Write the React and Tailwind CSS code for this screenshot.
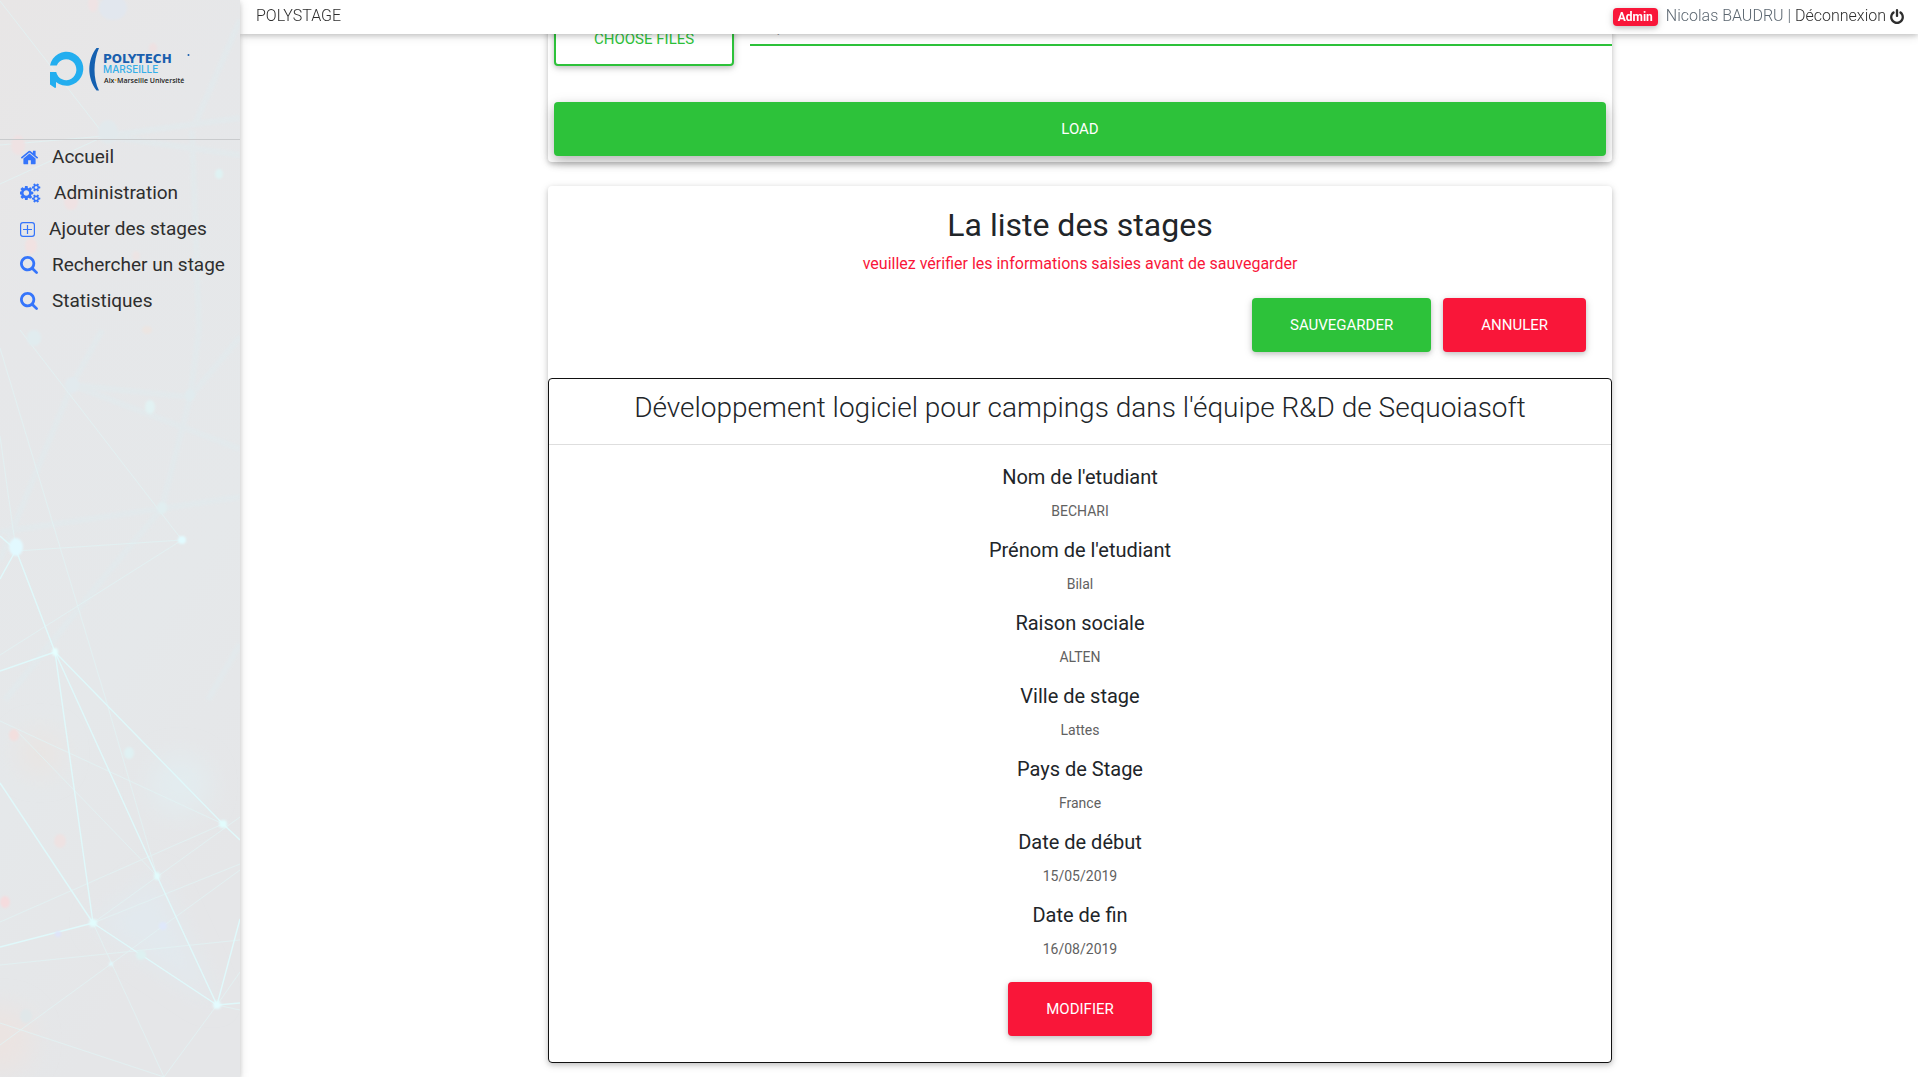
import React from "react";

const ICONS = {
  home: {
    box: "0 0 1792 1792",
    d: "M1472 992v480q0 26-19 45t-45 19h-384v-384h-256v384h-384q-26 0-45-19t-19-45v-480q0-1 .5-3t.5-3l575-474 575 474q1 2 1 6zm223-69l-62 74q-8 9-21 11h-3q-13 0-21-7l-692-577-692 577q-12 8-24 7-13-2-21-11l-62-74q-8-10-7-23.5t11-21.5l719-599q32-26 76-26t76 26l244 204v-195q0-14 9-23t23-9h192q14 0 23 9t9 23v408l219 182q10 8 11 21.5t-7 23.5z",
  },
  search: {
    box: "64 128 1664 1664",
    d: "M1216 832q0-185-131.5-316.5t-316.5-131.5-316.5 131.5-131.5 316.5 131.5 316.5 316.5 131.5 316.5-131.5 131.5-316.5zm512 832q0 52-38 90t-90 38q-54 0-90-38l-343-342q-179 124-399 124-143 0-273.5-55.5t-225-150-150-225-55.5-273.5 55.5-273.5 150-225 225-150 273.5-55.5 273.5 55.5 225 150 150 225 55.5 273.5q0 220-124 399l343 343q37 37 37 90z",
  },
  cogs: {
    box: "0 0 1920 1792",
    d: "M832 896q0-106-75-181t-181-75-181 75-75 181 75 181 181 75 181-75 75-181zm768 512q0-52-38-90t-90-38-90 38-38 90q0 53 37.5 90.5t90.5 37.5 90.5-37.5 37.5-90.5zm0-1024q0-52-38-90t-90-38-90 38-38 90q0 53 37.5 90.5t90.5 37.5 90.5-37.5 37.5-90.5zm-384 421v185q0 10-7 19.5t-16 10.5l-155 24q-11 35-32 76 34 48 90 115 7 11 7 20 0 12-7 19-23 30-82.5 89.5t-78.5 59.5q-11 0-21-7l-115-90q-37 19-77 31-11 108-23 155-7 24-30 24h-186q-11 0-20-7.5t-10-17.5l-23-153q-34-10-75-31l-118 89q-7 7-20 7-11 0-21-8-144-133-144-160 0-9 7-19 10-14 41-53t47-61q-23-44-35-82l-152-24q-10-1-17-9.5t-7-19.5v-185q0-10 7-19.5t16-10.5l155-24q11-35 32-76-34-48-90-115-7-11-7-20 0-12 7-20 22-30 82-89t79-59q11 0 21 7l115 90q34-18 77-32 11-108 23-154 7-24 30-24h186q11 0 20 7.5t10 17.5l23 153q34 10 75 31l118-89q8-7 20-7 11 0 21 8 144 133 144 160 0 8-7 19-12 16-42 54t-45 60q23 48 34 82l152 23q10 2 17 10.5t7 19.5zm640 533v140q0 16-149 31-12 27-30 52 51 113 51 138 0 4-4 7-122 71-124 71-8 0-46-47t-52-68q-20 2-30 2t-30-2q-14 21-52 68t-46 47q-2 0-124-71-4-3-4-7 0-25 51-138-18-25-30-52-149-15-149-31v-140q0-16 149-31 13-29 30-52-51-113-51-138 0-4 4-7 4-2 35-20t59-34 30-16q8 0 46 46.5t52 67.5q20-2 30-2t30 2q51-71 92-112l6-2q4 0 124 70 4 3 4 7 0 25-51 138 17 23 30 52 149 15 149 31zm0-1024v140q0 16-149 31-12 27-30 52 51 113 51 138 0 4-4 7-122 71-124 71-8 0-46-47t-52-68q-20 2-30 2t-30-2q-14 21-52 68t-46 47q-2 0-124-71-4-3-4-7 0-25 51-138-18-25-30-52-149-15-149-31v-140q0-16 149-31 13-29 30-52-51-113-51-138 0-4 4-7 4-2 35-20t59-34 30-16q8 0 46 46.5t52 67.5q20-2 30-2t30 2q51-71 92-112l6-2q4 0 124 70 4 3 4 7 0 25-51 138 17 23 30 52 149 15 149 31z",
  },
  power: {
    box: "128 0 1536 1664",
    d: "M1664 896q0 156-61 298t-164 245-245 164-298 61-298-61-245-164-164-245-61-298q0-182 80.5-343t226.5-270q43-32 95.5-25t83.5 50q32 42 24.5 94.5t-49.5 84.5q-98 74-151.5 181t-53.5 228q0 104 40.5 198.5t109.5 163.5 163.5 109.5 198.5 40.5 198.5-40.5 163.5-109.5 109.5-163.5 40.5-198.5q0-121-53.5-228t-151.5-181q-42-32-49.5-84.5t24.5-94.5q31-43 84-50t95 25q146 109 226.5 270t80.5 343zm-640-768v640q0 52-38 90t-90 38-90-38-38-90v-640q0-52 38-90t90-38 90 38 38 90z",
  },
};

function Icon({ name, className }) {
  if (name === "plus") {
    return (
      <svg viewBox="0 0 15 15" className={className} fill="none" stroke="currentColor" aria-hidden="true">
        <rect x="0.6" y="0.6" width="13.8" height="13.8" rx="2.4" strokeWidth="1.2" />
        <path d="M7.5 3v9M3 7.5h9" strokeWidth="1.2" />
      </svg>
    );
  }
  return (
    <svg viewBox={ICONS[name].box} className={className} fill="currentColor" aria-hidden="true">
      <path d={ICONS[name].d} />
    </svg>
  );
}

const NAV = [
  { label: "Accueil", icon: "home", size: "w-[19px] h-[19px] mr-[13px]" },
  { label: "Administration", icon: "cogs", size: "w-[21px] h-[20px] mr-[13px]" },
  { label: "Ajouter des stages", icon: "plus", size: "w-[15px] h-[15px] mr-[14px]" },
  { label: "Rechercher un stage", icon: "search", size: "w-[18px] h-[18px] mr-[14px]" },
  { label: "Statistiques", icon: "search", size: "w-[18px] h-[18px] mr-[14px]" },
];

const FIELDS = [
  ["Nom de l'etudiant", "BECHARI"],
  ["Prénom de l'etudiant", "Bilal"],
  ["Raison sociale", "ALTEN"],
  ["Ville de stage", "Lattes"],
  ["Pays de Stage", "France"],
  ["Date de début", "15/05/2019"],
  ["Date de fin", "16/08/2019"],
];

const RAISED = "shadow-[0_2px_5px_rgba(0,0,0,0.16),0_2px_10px_rgba(0,0,0,0.12)]";

const BTN = "rounded-sm px-[38px] py-4 text-[15px] leading-[22px] uppercase " + RAISED;

function Logo() {
  return (
    <svg viewBox="0 0 142 46" className="w-[142px] h-[46px]" role="img" aria-label="Polytech Marseille">
      <path
        d="M0 18.5A16.8 17 0 1 1 6 35V40.5L5 41 0 37.500V25H6.200A10.200 10.500 0 1 0 6.800 18.500Z"
        fill="#23aeef"
      />
      <path d="M46.500 1h2.500C43 14 43 32 49 43.500h-2.500C37 31 37 13 46.500 1z" fill="#1460b0" />
      <text x="53" y="16" fontFamily="DejaVu Sans, sans-serif" fontWeight="700" fontSize="12" fill="#1a5fae">
        POLYTECH
      </text>
      <text x="53" y="26" fontFamily="Inter, sans-serif" fontWeight="500" fontSize="10" fill="#35aee8">
        MARSEILLE
      </text>
      <text x="54" y="36" fontFamily="Open Sans, sans-serif" fontWeight="600" fontSize="7" fill="#222">
        Aix<tspan fill="#f5b324">•</tspan>Marseille Université
      </text>
      <circle cx="138.500" cy="8" r="1" fill="#1a5fae" />
    </svg>
  );
}

const BRIGHT = [
  [16, 550, 55, 652], [55, 652, 0, 671], [55, 652, 223, 824], [55, 652, 157, 876], [55, 652, 93, 923],
  [223, 824, 240, 840], [0, 783, 93, 923], [93, 923, 0, 947], [93, 923, 217, 1005], [157, 876, 217, 1005],
  [217, 1005, 240, 919], [217, 1005, 240, 1003], [16, 550, 0, 536], [16, 550, 0, 579],
];
const FAINT = [
  [20, 330, 182, 540], [16, 551, 182, 540], [182, 540, 0, 655], [0, 348, 106, 700], [106, 700, 157, 876],
  [0, 436, 16, 550], [0, 721, 223, 824], [16, 730, 157, 876], [0, 922, 223, 824], [93, 923, 240, 817],
  [93, 923, 240, 864], [111, 964, 240, 870], [0, 965, 240, 940], [111, 964, 0, 1045], [93, 923, 164, 1077],
  [0, 1023, 164, 1077], [164, 1077, 217, 1005], [217, 1005, 240, 972], [217, 1005, 240, 1010],
  [0, 145, 105, 136], [0, 184, 105, 136], [0, 1, 105, 136],
];
const HAZE = [
  [72, 385, 102, 330], [72, 385, 190, 397], [190, 397, 240, 337], [190, 397, 162, 508], [190, 397, 199, 330],
  [72, 385, 0, 560], [72, 385, 240, 449], [162, 508, 105, 576], [0, 532, 240, 497], [105, 576, 5, 700],
  [105, 136, 240, 118], [105, 136, 240, 155], [195, 124, 240, 20], [199, 330, 192, 130], [208, 700, 240, 644],
];
const DOTS = [
  [16, 547, 7, 9, "#e2f9ff"], [182, 540, 4, 4, "#e2fbff"], [55, 652, 3, 4, "#e6ffff"], [223, 824, 4, 4, "#e2fcfd"],
  [157, 876, 3, 4, "#e2fcfd"], [93, 923, 4, 4, "#e2fcfd"], [217, 1005, 4, 4, "#e4fcff"], [111, 964, 2, 2, "#e2fbff"],
  [150, 407, 5, 7, "#e2f2f3"], [129, 753, 5, 6, "#e0f1f3"], [219, 174, 4, 5, "#dff2f3"], [34, 338, 7, 8, "#e1ecef"],
  [72, 385, 7, 8, "#e2eaee"], [190, 395, 5, 6, "#e1ebee"], [162, 508, 5, 6, "#e1eef0"], [163, 926, 4, 4, "#dfe8fb"],
  [58, 934, 3, 3, "#dfe4fb"], [141, 955, 5, 5, "#ddf1f1"], [108, 132, 10, 12, "#e2e9ec"], [113, 8, 14, 12, "#e2e7ee"],
  [26, 1016, 6, 7, "#e0e7e9"], [18, 145, 7, 10, "#efe2e3"], [31, 246, 6, 8, "#f1e2e2"], [71, 202, 7, 8, "#efe2e3"],
  [14, 735, 5, 6, "#f3dfde"], [60, 841, 6, 7, "#eee2e2"], [5, 902, 5, 6, "#f5dcde"], [136, 256, 4, 5, "#ece4e4"],
  [153, 48, 4, 5, "#eee1e2"], [93, 4, 5, 8, "#efe3e4"], [147, 330, 5, 4, "#ece5e2"],
];

function Lines({ data, ...rest }) {
  return (
    <g {...rest}>
      {data.map(([x1, y1, x2, y2], i) => (
        <line key={i} x1={x1} y1={y1} x2={x2} y2={y2} />
      ))}
    </g>
  );
}

function NetworkArt() {
  return (
    <svg
      viewBox="0 0 240 1077"
      preserveAspectRatio="xMidYMid slice"
      className="absolute inset-0 -z-10 h-full w-full"
      aria-hidden="true"
    >
      <defs>
        <linearGradient id="base" x1="0" y1="0" x2="0.3" y2="1">
          <stop offset="0" stopColor="#e8e6e6" />
          <stop offset="0.3" stopColor="#e6e7e9" />
          <stop offset="0.7" stopColor="#e5e8ea" />
          <stop offset="1" stopColor="#e5e6e8" />
        </linearGradient>
        <filter id="soft" x="-60%" y="-60%" width="220%" height="220%">
          <feGaussianBlur stdDeviation="1.300" />
        </filter>
        <filter id="wide" x="-60%" y="-60%" width="220%" height="220%">
          <feGaussianBlur stdDeviation="12" />
        </filter>
      </defs>
      <rect width="240" height="1077" fill="url(#base)" />
      <g filter="url(#wide)">
        <circle cx="180" cy="785" r="30" fill="#e3ecef" />
        <circle cx="40" cy="753" r="22" fill="#e9e5e3" />
        <circle cx="0" cy="1040" r="34" fill="#ebe4e2" />
        <path d="M93 923L157 876 217 1005z" fill="#e2e9ee" />
      </g>
      <Lines data={HAZE} stroke="#e2eaed" strokeWidth="6" opacity="0.7" filter="url(#soft)" />
      <Lines data={FAINT} stroke="#e2f3f4" strokeWidth="1" opacity="0.8" />
      <Lines data={BRIGHT} stroke="#e0f9fb" strokeWidth="1.400" />
      <g filter="url(#soft)">
        {DOTS.map(([cx, cy, rx, ry, fill], i) => (
          <ellipse key={i} cx={cx} cy={cy} rx={rx} ry={ry} fill={fill} />
        ))}
      </g>
    </svg>
  );
}

function Sidebar() {
  return (
    <aside className={"fixed inset-y-0 left-0 z-20 isolate w-60 " + RAISED}>
      <NetworkArt />
      <a href="#accueil" className="flex h-[139px] items-center justify-center pl-[2px]">
        <Logo />
      </a>
      <nav className="border-t border-[#c9cbcd]">
        <ul>
          {NAV.map((item) => (
            <li key={item.label}>
              <a href="#" className="flex h-9 items-center pb-0.5 pl-5 text-[19px] leading-[34px] whitespace-nowrap text-[#2e2e2e]">
                <Icon name={item.icon} className={"shrink-0 text-[#3575fb] " + item.size} />
                {item.label}
              </a>
            </li>
          ))}
        </ul>
      </nav>
    </aside>
  );
}

function Header() {
  return (
    <header
      className={
        "fixed top-0 right-0 left-60 z-10 flex h-[34px] items-center justify-between bg-white pr-3.5 pb-0.5 pl-4 text-[16px] font-light text-[#2e2e2e] " +
        RAISED
      }
    >
      <span>POLYSTAGE</span>
      <div className="flex items-center">
        <span className={"mt-0.5 mr-2 rounded-sm bg-[#f91639] px-[5px] text-[12px] leading-[18px] font-bold text-white " + RAISED}>
          Admin
        </span>
        <span className="mr-1 text-[#5b6670]">Nicolas BAUDRU |</span>
        <a href="#deconnexion" className="flex items-center gap-1">
          Déconnexion
          <Icon name="power" className="h-[15px] w-[14px]" />
        </a>
      </div>
    </header>
  );
}

export default function App() {
  return (
    <div className="min-h-screen bg-white font-[Roboto,sans-serif] text-[#212529]">
      <Sidebar />
      <Header />
      <main className="ml-60 pr-10 pb-3 pl-[42px]">
        <div className="mx-auto w-2/3">
          <section className={"mb-6 rounded bg-white pt-3 pb-1.5 " + RAISED}>
            <div className="flex items-start gap-4 pl-1.5">
              <button
                type="button"
                className={
                  "rounded-sm border-2 border-[#2dc23a] bg-white px-[38px] py-[14px] text-[15px] leading-[22px] text-[#2dc23a] uppercase " +
                  RAISED
                }
              >
                Choose files
              </button>
              <input
                type="text"
                readOnly
                aria-label="Fichiers"
                placeholder="Upload one or more files"
                className="h-[34px] min-w-0 flex-1 border-b-2 border-[#2dc23a] pb-1 pl-4 text-[16px] text-[#495057] outline-none"
              />
            </div>
            <div className="mt-9 px-1.5">
              <button
                type="button"
                className="w-full rounded-sm bg-[#2dc23a] py-4 text-[15px] leading-[22px] text-white uppercase shadow-[0_5px_11px_rgba(0,0,0,0.18),0_4px_15px_rgba(0,0,0,0.15)]"
              >
                Load
              </button>
            </div>
          </section>

          <section className={"rounded bg-white pt-5 " + RAISED}>
            <h1 className="text-center text-[32px] leading-[38px]">La liste des stages</h1>
            <p className="mt-2 text-center text-[16px] leading-6 text-[#f91639]">
              veuillez vérifier les informations saisies avant de sauvegarder
            </p>
            <div className="mt-[22px] mb-[26px] flex justify-end gap-3 pr-[26px]">
              <button type="button" className={"bg-[#2dc23a] text-white " + BTN}>
                Sauvegarder
              </button>
              <button type="button" className={"bg-[#f91639] text-white " + BTN}>
                Annuler
              </button>
            </div>

            <article className="rounded border border-[#111] text-center">
              <h2 className="border-b border-[#dedede] pt-3 pb-[19px] text-[28px] leading-[34px] font-light">
                Développement logiciel pour campings dans l'équipe R&amp;D de Sequoiasoft
              </h2>
              <dl className="mt-5 flex flex-col gap-4">
                {FIELDS.map(([label, value]) => (
                  <div key={label}>
                    <dt className="text-[20px] leading-6">{label}</dt>
                    <dd className="mt-[11px] text-[14px] leading-[22px] text-[#616161]">{value}</dd>
                  </div>
                ))}
              </dl>
              <button type="button" className={"mt-[22px] mb-[26px] bg-[#f91639] text-white " + BTN}>
                Modifier
              </button>
            </article>
          </section>
        </div>
      </main>
    </div>
  );
}
